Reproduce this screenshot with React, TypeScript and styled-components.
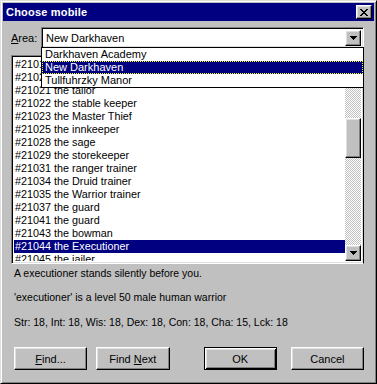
import React from "react";
import styled, { createGlobalStyle } from "styled-components";

const GlobalStyle = createGlobalStyle`
  html, body {
    margin: 0;
    padding: 0;
    background: #c0c0c0;
  }
  body {
    font-family: "Liberation Sans", Arial, sans-serif;
    font-size: 11px;
    color: #000;
  }
`;

const areas = ["Darkhaven Academy", "New Darkhaven", "Tullfuhrzky Manor"];

const mobiles = [
  "#21010 the mayor",
  "#21020 the smith",
  "#21021 the tailor",
  "#21022 the stable keeper",
  "#21023 the Master Thief",
  "#21025 the innkeeper",
  "#21028 the sage",
  "#21029 the storekeeper",
  "#21031 the ranger trainer",
  "#21034 the Druid trainer",
  "#21035 the Warrior trainer",
  "#21037 the guard",
  "#21041 the guard",
  "#21043 the bowman",
  "#21044 the Executioner",
  "#21045 the jailer",
];

const Window = styled.div`
  box-sizing: border-box;
  width: 377px;
  height: 384px;
  padding: 2px;
  background: #c0c0c0;
  border: 1px solid;
  border-color: #dfdfdf #000 #000 #dfdfdf;
  box-shadow: inset 1px 1px #fff, inset -1px -1px #808080;
  display: flex;
  flex-direction: column;
`;

const TitleBar = styled.div`
  height: 18px;
  background: #000080;
  display: flex;
  align-items: center;
  justify-content: space-between;
  padding: 0 2px 0 3px;
`;

const Title = styled.span`
  color: #fff;
  font-weight: bold;
  font-size: 11px;
  letter-spacing: 0.2px;
`;

const Bevel = styled.div`
  box-sizing: border-box;
  background: #c0c0c0;
  border: 1px solid;
  border-color: #fff #000 #000 #fff;
  box-shadow: inset -1px -1px #808080, inset 1px 1px #dfdfdf;
  display: flex;
  align-items: center;
  justify-content: center;
`;

const CloseButton = styled(Bevel)`
  width: 16px;
  height: 14px;
`;

const Body = styled.div`
  display: flex;
  flex-direction: column;
  padding: 6px 10px 0 8px;
`;

const AreaRow = styled.div`
  display: flex;
  align-items: center;
  height: 21px;
`;

const Label = styled.span`
  width: 30px;
`;

const Sunken = styled.div`
  box-sizing: border-box;
  border: 1px solid;
  border-color: #808080 #fff #fff #808080;
  box-shadow: inset 1px 1px #000, inset -1px -1px #dfdfdf;
  background: #fff;
`;

const Combo = styled(Sunken)`
  flex: 1;
  height: 21px;
  display: flex;
  align-items: center;
  padding: 2px;
`;

const ComboText = styled.span`
  flex: 1;
  padding-left: 2px;
`;

const ArrowButton = styled(Bevel)`
  width: 16px;
  height: 16px;
  flex-shrink: 0;
`;

const ListArea = styled.div`
  position: relative;
  margin-top: 7px;
`;

const ListBox = styled(Sunken)`
  height: 209px;
  display: flex;
  padding: 2px;
  border-right-color: #000;
  overflow: hidden;
`;

const Rows = styled.div`
  flex: 1;
  overflow: hidden;
`;

const Row = styled.div<{ $selected?: boolean }>`
  height: 13px;
  line-height: 13px;
  font-size: 10.8px;
  padding-left: 1px;
  white-space: nowrap;
  background: ${(p) => (p.$selected ? "#000080" : "transparent")};
  color: ${(p) => (p.$selected ? "#fff" : "#000")};
`;

const ScrollBar = styled.div`
  width: 16px;
  display: flex;
  flex-direction: column;
`;

const Track = styled.div`
  flex: 1;
  background-color: #fff;
  background-image: repeating-conic-gradient(#c0c0c0 0 25%, #fff 0 50%);
  background-size: 2px 2px;
`;

const Thumb = styled(Bevel)<{ $offset: number }>`
  height: 40px;
  margin-top: ${(p) => p.$offset}px;
`;

const Popup = styled.div`
  position: absolute;
  left: 30px;
  top: -8px;
  width: 323px;
  box-sizing: border-box;
  border: 1px solid #000;
  background: #fff;
`;

const PopupItem = styled.div<{ $selected?: boolean }>`
  height: 13px;
  line-height: 13px;
  padding-left: 3px;
  box-sizing: border-box;
  background: ${(p) => (p.$selected ? "#000080" : "transparent")};
  color: ${(p) => (p.$selected ? "#fff" : "#000")};
  outline: ${(p) => (p.$selected ? "1px dotted #ffff00" : "none")};
  outline-offset: -1px;
`;

const Info = styled.div<{ $gap: number }>`
  margin-top: ${(p) => p.$gap}px;
  padding-left: 3px;
  line-height: 13px;
  font-size: 10.5px;
  white-space: nowrap;
`;

const Buttons = styled.div`
  display: flex;
  margin-top: 18px;
  padding-left: 3px;
`;

const Button = styled(Bevel)<{ $gap: number; $default?: boolean }>`
  width: 75px;
  height: 23px;
  margin-left: ${(p) => p.$gap}px;
  ${(p) =>
    p.$default &&
    `
    border-color: #000;
    box-shadow: inset 1px 1px #fff, inset -1px -1px #000, inset 2px 2px #dfdfdf, inset -2px -2px #808080;
  `}
`;

const Arrow = ({ up }: { up?: boolean }) => (
  <svg width="7" height="4" viewBox="0 0 7 4" style={{ transform: up ? "rotate(180deg)" : undefined }}>
    <path d="M0 0h7v1H0zM1 1h5v1H1zM2 2h3v1H2zM3 3h1v1H3z" fill="#000" />
  </svg>
);

const CloseGlyph = () => (
  <svg width="8" height="7" viewBox="0 0 8 7">
    <path
      d="M0 0h2v1H0zM6 0h2v1H6zM1 1h2v1H1zM5 1h2v1H5zM2 2h4v1H2zM3 3h2v1H3zM2 4h4v1H2zM1 5h2v1H1zM5 5h2v1H5zM0 6h2v1H0zM6 6h2v1H6z"
      fill="#000"
    />
  </svg>
);

const App: React.FC = () => {
  return (
    <>
      <GlobalStyle />
      <Window>
        <TitleBar>
          <Title>Choose mobile</Title>
          <CloseButton>
            <CloseGlyph />
          </CloseButton>
        </TitleBar>
        <Body>
          <AreaRow>
            <Label>
              <u>A</u>rea:
            </Label>
            <Combo>
              <ComboText>New Darkhaven</ComboText>
              <ArrowButton>
                <Arrow />
              </ArrowButton>
            </Combo>
          </AreaRow>
          <ListArea>
            <ListBox>
              <Rows>
                {mobiles.map((m, i) => (
                  <Row key={m} $selected={i === 14}>
                    {m}
                  </Row>
                ))}
              </Rows>
              <ScrollBar>
                <ArrowButton>
                  <Arrow up />
                </ArrowButton>
                <Track>
                  <Thumb $offset={44} />
                </Track>
                <ArrowButton>
                  <Arrow />
                </ArrowButton>
              </ScrollBar>
            </ListBox>
            <Popup>
              {areas.map((a) => (
                <PopupItem key={a} $selected={a === "New Darkhaven"}>
                  {a}
                </PopupItem>
              ))}
            </Popup>
          </ListArea>
          <Info $gap={3}>A executioner stands silently before you.</Info>
          <Info $gap={11}>'executioner' is a level 50 male human warrior</Info>
          <Info $gap={12}>Str: 18, Int: 18, Wis: 18, Dex: 18, Con: 18, Cha: 15, Lck: 18</Info>
          <Buttons>
            <Button $gap={0}>
              <span>
                <u>F</u>ind...
              </span>
            </Button>
            <Button $gap={9}>
              <span>
                Find <u>N</u>ext
              </span>
            </Button>
            <Button $gap={34} $default>
              OK
            </Button>
            <Button $gap={14}>Cancel</Button>
          </Buttons>
        </Body>
      </Window>
    </>
  );
};

export default App;
